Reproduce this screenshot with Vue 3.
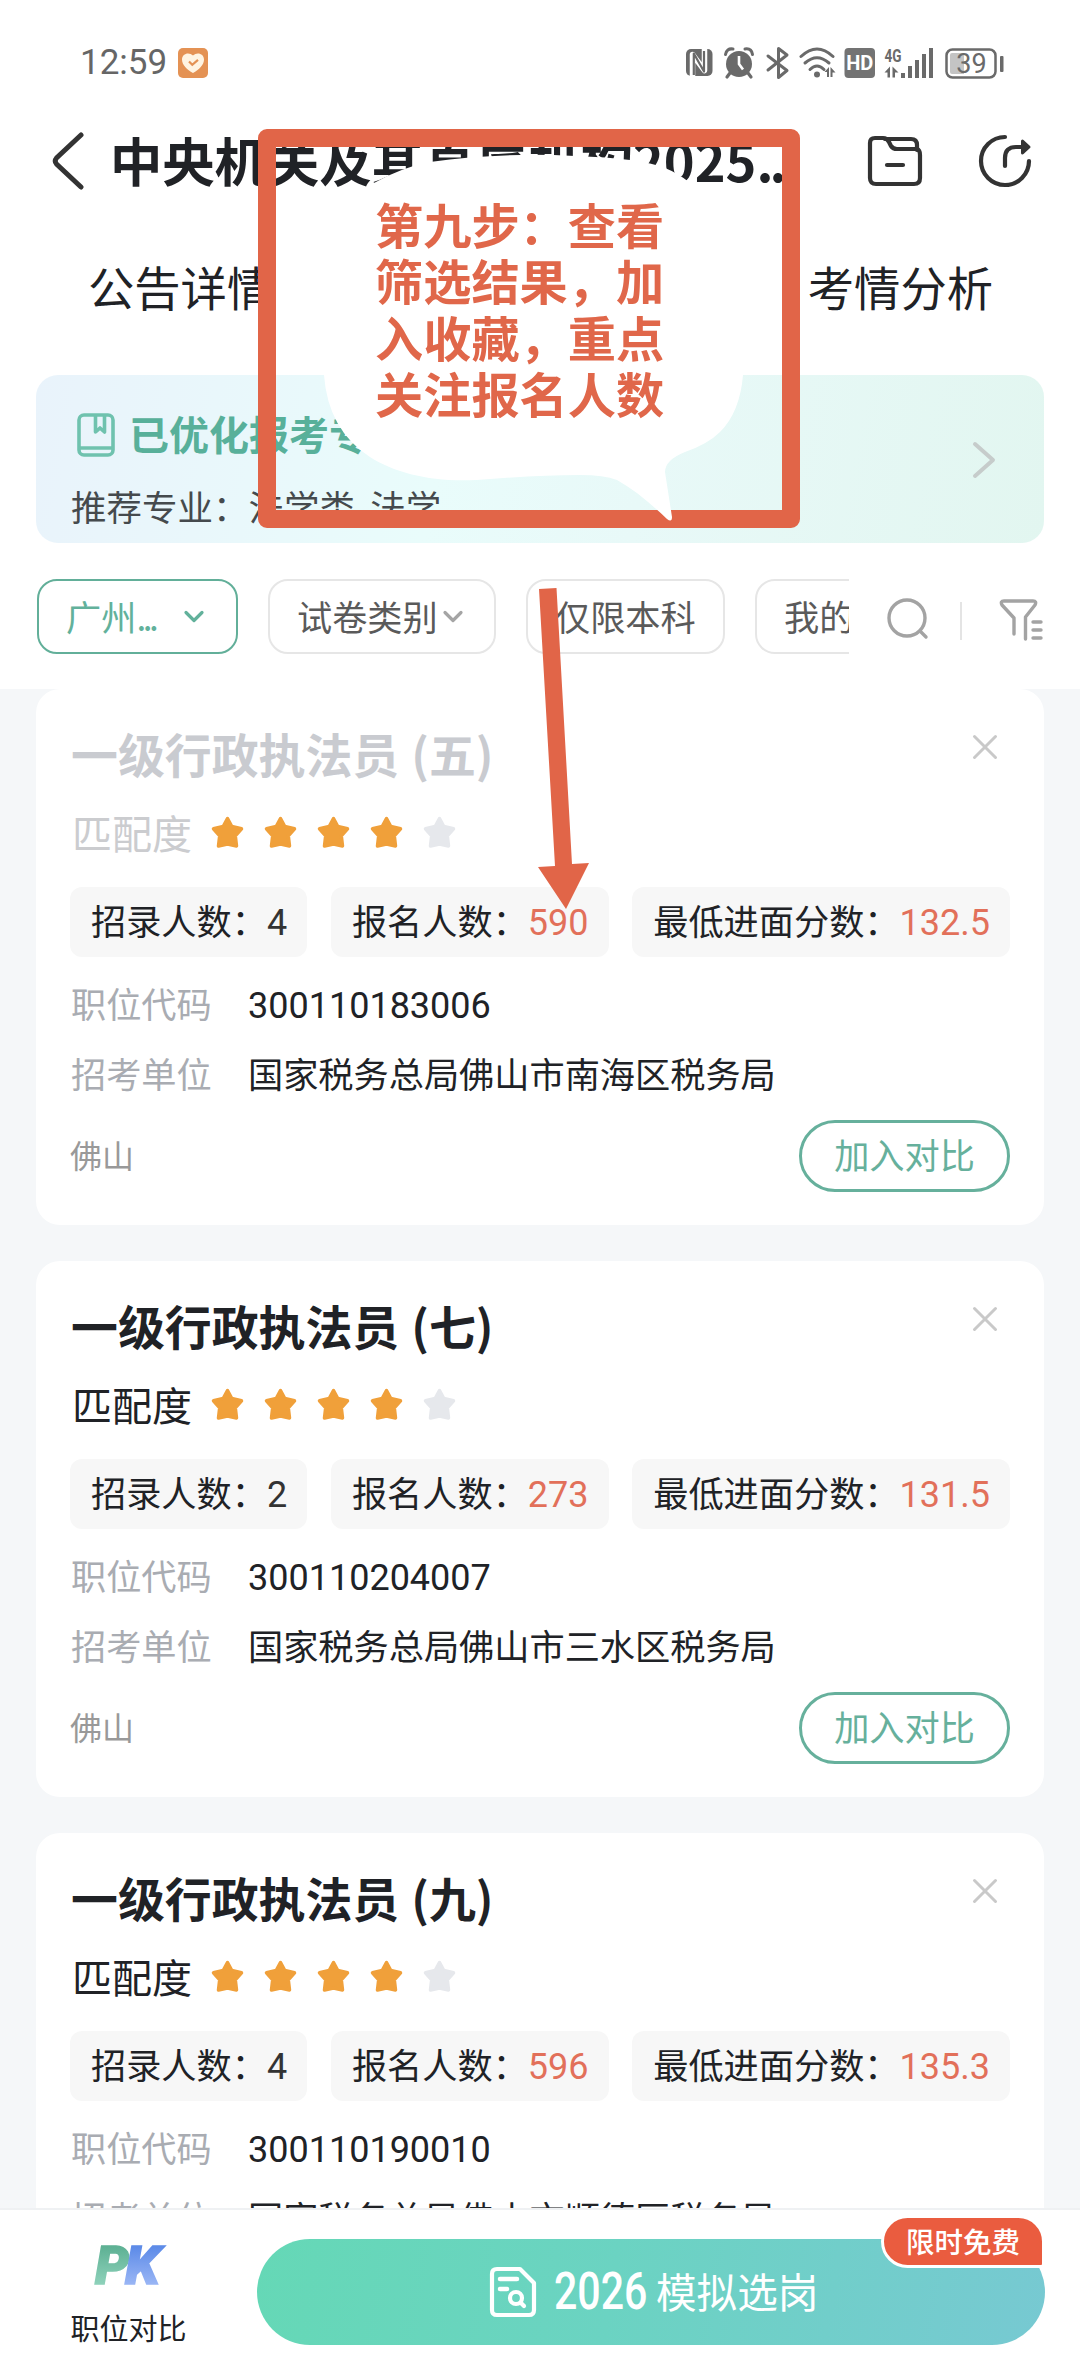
<script setup>
const chips = [
  { text: '广州', more: true, arrow: true, active: true, width: 201 },
  { text: '试卷类别', arrow: true, width: 228 },
  { text: '仅限本科', width: 199 },
  { text: '我的专业', width: 199 },
]

const jobs = [
  { no: '五', hires: 4, applicants: 590, score: '132.5', code: '300110183006', unit: '国家税务总局佛山市南海区税务局', viewed: true },
  { no: '七', hires: 2, applicants: 273, score: '131.5', code: '300110204007', unit: '国家税务总局佛山市三水区税务局' },
  { no: '九', hires: 4, applicants: 596, score: '135.3', code: '300110190010', unit: '国家税务总局佛山市顺德区税务局' },
]
</script>

<template>
  <div class="screen">
    <header class="status">
      <div class="status-left">
        <span class="clock">12:59</span>
        <svg class="heart" width="30" height="30" viewBox="0 0 30 30">
          <rect width="30" height="30" rx="5" fill="#e49254" />
          <path d="M15 25C9 21.500 4 17 4 11.500C4 5.500 11 3.500 15 7.500C19 3.500 26 5.500 26 11.500C26 17 21 21.500 15 25Z" fill="#fff4e2" />
          <path d="M11 13.500L14.300 16.800L20 11.800" fill="none" stroke="#e49254" stroke-width="2.200" />
        </svg>
      </div>
      <svg class="status-icons" width="322" height="36" viewBox="0 0 322 36">
        <rect x="1" y="4" width="26.500" height="27" rx="5" fill="#6a6a6a" />
        <path d="M7.500 32V9.500L19.500 25.500V2.500" fill="none" stroke="#fff" stroke-width="5.500" stroke-linejoin="round" />
        <path d="M8.800 30V8.500L19 26.500V6" fill="none" stroke="#6a6a6a" stroke-width="2.200" stroke-linejoin="round" />
        <circle cx="54" cy="19" r="13" fill="#6a6a6a" />
        <path d="M45 28l-3 4M63 28l3 4" stroke="#6a6a6a" stroke-width="3.200" stroke-linecap="round" />
        <path d="M40.500 9.500Q41.500 3 48 4M60 4Q66.500 3 67.500 9.500" fill="none" stroke="#6a6a6a" stroke-width="3" stroke-linecap="round" />
        <path d="M54 11V19L58 24.500" fill="none" stroke="#fff" stroke-width="2.600" />
        <path d="M83 11L102 25.500L93.500 32.500V3.500L102 10L83 25" fill="none" stroke="#6a6a6a" stroke-width="3" stroke-linejoin="round" stroke-linecap="round" />
        <g fill="none" stroke="#6a6a6a" stroke-width="3" stroke-linecap="round">
          <path d="M116 11.500Q132 -3.500 148 11.500" />
          <path d="M120 18Q132 7.500 144 18" />
          <path d="M125 24.500Q132 17.500 139 24.500" />
        </g>
        <circle cx="132" cy="29.500" r="3" fill="#6a6a6a" />
        <path d="M139.500 27l4.500-5v10h-2v-5zM145.500 22v10h2v-4.500h3z" fill="#6a6a6a" />
        <rect x="159.500" y="3" width="30.500" height="30" rx="4" fill="#737373" />
        <text x="174.800" y="25" text-anchor="middle" class="hd">HD</text>
        <text x="199.500" y="17" class="net" textLength="17" lengthAdjust="spacingAndGlyphs">4G</text>
        <path d="M199.500 27.500l5.500-6v11h-2.500v-5zM207.500 21.500v11h2.500v-5h3.500z" fill="#6a6a6a" />
        <path d="M216 28h4v5h-4zM223 21h4v12h-4zM230 15h4v18h-4zM237 9h4v24h-4zM244 3h4v30h-4z" fill="#6a6a6a" />
        <rect x="261.500" y="4.500" width="49" height="28" rx="6" fill="none" stroke="#6a6a6a" stroke-width="2.500" />
        <path d="M265 10q0-2 2-2h12v21h-12q-2 0-2-2z" fill="#c4c4c4" />
        <rect x="315" y="11" width="3.500" height="16" rx="1" fill="#6a6a6a" />
        <text x="286.500" y="28" text-anchor="middle" class="batt">39</text>
      </svg>
    </header>

    <nav class="navbar">
      <svg class="back" width="34" height="58" viewBox="0 0 34 58">
        <path d="M29 3L4.500 26Q2 29 4.500 32L29 55" fill="none" stroke="#333" stroke-width="5" stroke-linecap="round" />
      </svg>
      <h1>中央机关及其直属机构2025<span class="dots">...</span></h1>
      <svg class="folder" width="56" height="52" viewBox="0 0 56 52">
        <g fill="none" stroke="#333" stroke-width="4.200" stroke-linejoin="round" stroke-linecap="round">
          <path d="M3 43V8Q3 3 8 3H16Q20 3 22 7L24 11Q26 14 30 14H50Q53 15 53 20V43Q53 49 47 49H9Q3 49 3 43Z" />
          <path d="M18 4H44Q50 4 50 10V15" />
          <path d="M20 30H36" />
        </g>
      </svg>
      <svg class="share" width="56" height="56" viewBox="0 0 56 56">
        <g fill="none" stroke="#333" stroke-width="4.200" stroke-linecap="round" stroke-linejoin="round">
          <path d="M28 4A24 24 0 1 0 52 28" />
          <path d="M28 33V25Q28 14 39 14H50" />
          <path d="M45.500 8L52 14L45.500 20Z" fill="#333" stroke-width="3" />
        </g>
      </svg>
    </nav>

    <div class="tabs"><span>公告详情</span><span>考情分析</span></div>

    <section class="banner">
      <div>
        <div class="banner-title">
          <svg width="38" height="44" viewBox="0 0 38 44">
            <g fill="none" stroke="#6fc2ae" stroke-width="3.600" stroke-linejoin="round">
              <rect x="2" y="2" width="34" height="40" rx="5" />
              <path d="M2 35H36M18.500 2V19L23 15L27.500 19V2" />
            </g>
          </svg>
          <b>已优化报考专业</b>
        </div>
        <p>推荐专业：法学类<i>-</i>法学</p>
      </div>
      <svg width="24" height="40" viewBox="0 0 24 40">
        <path d="M3 4L21 20L3 36" fill="none" stroke="#c6cccb" stroke-width="4" stroke-linecap="round" stroke-linejoin="round" />
      </svg>
    </section>

    <div class="filters">
      <div class="chips">
        <div v-for="c in chips" :key="c.text" class="chip" :class="{ active: c.active }" :style="{ width: c.width + 'px' }">
          <span>{{ c.text }}<i v-if="c.more">...</i></span>
          <svg v-if="c.arrow" width="22" height="16" viewBox="0 0 22 16">
            <path d="M3 3.500L11 11.500L19 3.500" fill="none" stroke="currentColor" stroke-width="3.200" stroke-linecap="round" stroke-linejoin="round" />
          </svg>
        </div>
      </div>
      <svg class="search" width="44" height="44" viewBox="0 0 44 44">
        <g fill="none" stroke="#a3a3a3" stroke-width="3.400" stroke-linecap="round">
          <circle cx="21" cy="21" r="18" /><path d="M34 34L40 40" />
        </g>
      </svg>
      <i class="divider"></i>
      <svg class="funnel" width="44" height="42" viewBox="0 0 44 42">
        <g fill="none" stroke="#a3a3a3" stroke-width="3.400" stroke-linecap="round" stroke-linejoin="round">
          <path d="M15 35V19L3 6Q1 2 5 2H34Q38 2 36 6L26.500 18V40" />
          <path d="M34 23H42M34 31H42M34 39H42" />
        </g>
      </svg>
    </div>

    <main class="list">
      <article v-for="j in jobs" :key="j.no" class="card" :class="{ viewed: j.viewed }">
        <div class="card-head">
          <h2>一级行政执法员<span class="paren">({{ j.no }})</span></h2>
          <svg width="26" height="26" viewBox="0 0 26 26">
            <path d="M2.500 2.500L23.500 23.500M23.500 2.500L2.500 23.500" stroke="#c9c9c9" stroke-width="3" stroke-linecap="round" />
          </svg>
        </div>
        <div class="match">
          <span>匹配度</span>
          <svg v-for="n in 5" :key="n" width="33" height="33" viewBox="0 0 33 33" :class="n < 5 ? 'on' : 'off'">
            <path d="M16.500 2.500L20.800 10.500L30.500 12.800L24.300 19.800L25.500 30L16.500 28L7.500 30L8.700 19.800L2.500 12.800L12.200 10.500Z" />
          </svg>
        </div>
        <div class="tags">
          <span>招录人数：<em>{{ j.hires }}</em></span>
          <span>报名人数：<em class="red">{{ j.applicants }}</em></span>
          <span>最低进面分数：<em class="red">{{ j.score }}</em></span>
        </div>
        <dl>
          <dt>职位代码</dt><dd class="num">{{ j.code }}</dd>
          <dt>招考单位</dt><dd>{{ j.unit }}</dd>
        </dl>
        <div class="card-foot">
          <span>佛山</span>
          <button>加入对比</button>
        </div>
      </article>
    </main>

    <footer class="bottom">
      <div class="pk">
        <svg width="80" height="46" viewBox="0 0 80 46">
          <defs>
            <linearGradient id="pkP" x1="0" y1="4" x2="0" y2="42" gradientUnits="userSpaceOnUse"><stop stop-color="#5eb194" /><stop offset="1" stop-color="#8fd2bb" /></linearGradient>
            <linearGradient id="pkK" x1="0" y1="4" x2="0" y2="42" gradientUnits="userSpaceOnUse"><stop stop-color="#5d8be8" /><stop offset="1" stop-color="#9ab6f5" /></linearGradient>
          </defs>
          <text x="6" y="41" class="pk-letter" fill="url(#pkP)" stroke="url(#pkP)" textLength="34" lengthAdjust="spacingAndGlyphs">P</text>
          <text x="36" y="41" class="pk-letter" fill="url(#pkK)" stroke="url(#pkK)" textLength="35" lengthAdjust="spacingAndGlyphs">K</text>
        </svg>
        <span>职位对比</span>
      </div>
      <div class="cta">
        <svg width="48" height="52" viewBox="0 0 48 52">
          <g fill="none" stroke="#fff" stroke-width="4.200" stroke-linecap="round" stroke-linejoin="round">
            <path d="M8 3H31L45 17V44Q45 49 40 49H8Q3 49 3 44V8Q3 3 8 3Z" />
            <path d="M11 13H28M11 23H18" stroke-width="4.500" />
            <circle cx="27" cy="32" r="6" /><path d="M32 37L35 40" />
          </g>
        </svg>
        <span class="year"><b>2026</b></span>
        <span class="cta-text">模拟选岗</span>
        <div class="badge">限时免费</div>
      </div>
    </footer>

    <div class="frame"></div>
    <svg class="overlay" width="1080" height="940" viewBox="0 0 1080 940">
      <path fill="#fff" d="M374 183Q400 168 430 162Q500 152 575 156Q640 158 665 168Q690 178 712 205Q748 260 743 375Q740 412 720 432Q708 444 685 452Q665 460 665 472L672 517Q672 523 667 519C650 503 635 490 617 480Q604 475 580 475Q540 475 490 479C440 484 398 475 370 457Q328 430 324 375Q310 235 374 183Z" />
      <path fill="#e16548" d="M539 589L556.500 588L572 864L589 863L566 909L538 867L555 866Z" />
    </svg>
    <p class="note">第九步：查看筛选结果，加入收藏，重点关注报名人数</p>
  </div>
</template>

<style>
body { margin: 0; background: #fff; }
</style>

<style scoped>
* { box-sizing: border-box; }
.screen {
  position: relative;
  width: 1080px;
  height: 2372px;
  overflow: hidden;
  display: flex;
  flex-direction: column;
  background: #fff;
  color: #202226;
  font-family: "Noto Sans CJK SC", "Noto Sans", sans-serif;
  font-size: 35.200px;
}
h1, h2, p, dl, dd { margin: 0; }
svg { display: block; flex: none; }
i, em { font-style: normal; }

.status { height: 122px; padding: 45px 73px 0 80px; display: flex; justify-content: space-between; }
.status-left { display: flex; gap: 12px; height: 36px; align-items: center; }
.clock { width: 86px; font: 35px/36px Roboto, sans-serif; color: #666; white-space: nowrap; }
.hd { font: 700 20px Roboto, sans-serif; fill: #fff; }
.net { font: 700 19px Roboto, sans-serif; fill: #6a6a6a; }
.batt { font: 27px Roboto, sans-serif; fill: #6a6a6a; }

.navbar { height: 78px; padding-left: 52px; display: flex; align-items: center; }
.navbar svg { margin-top: -1px; }
h1 { width: 678px; margin-left: 24px; font-size: 52.300px; line-height: 74px; height: 78px; font-weight: 700; white-space: nowrap; overflow: hidden; }
.dots { letter-spacing: -4px; }
.navbar .folder { margin-left: 79px; }
.navbar .share { margin-left: 54px; }

.tabs { height: 175px; padding: 60px 87px 0 88px; display: flex; justify-content: space-between; font-size: 46.300px; line-height: 52px; }

.banner {
  height: 168px; margin: 0 36px; padding: 33px 48px 0 35px; border-radius: 22px;
  display: flex; justify-content: space-between;
  background: linear-gradient(100deg, #e9f3fb 0%, #e9fcfb 40%, #e8f9f8 60%, #e2f6f0 100%);
}
.banner > svg { margin-top: 32px; }
.banner-title { display: flex; align-items: center; gap: 14px; height: 50px; padding-left: 6px; color: #58b09a; }
.banner-title svg { margin-top: 4px; }
.banner-title b { font-size: 40px; line-height: 50px; }
.banner p { margin-top: 23px; font-size: 35.500px; line-height: 50px; color: #454a4d; }
.banner p i { margin: 0 1.500px; }

.filters { height: 146px; padding: 36px 36px 0 37px; display: flex; }
.chips { width: 812px; display: flex; gap: 30px; overflow: hidden; }
.chip {
  flex: none; height: 75px; padding-left: 27px; border: 2px solid #e6e6e6; border-radius: 20px;
  display: flex; align-items: center; color: #5a5a5a; white-space: nowrap;
}
.chip span { margin-top: -2px; }
.chip svg { margin-left: 4px; color: #a5a5a5; }
.chip.active { border-color: #62af99; color: #62b19b; }
.chip.active svg { margin-left: 28px; color: #62b19b; }
.chip i { letter-spacing: -3.500px; }
.search { margin: 18px 0 0 37px; }
.divider { width: 2px; height: 38px; margin: 23px 0 0 30px; background: #e4e4e4; }
.funnel { margin: 20px 0 0 37px; }

.list { height: 1519px; padding: 0 36px; overflow: hidden; background: #f5f7f9; display: flex; flex-direction: column; gap: 36px; }
.card { flex: none; height: 536px; padding: 36px 34px 0; border-radius: 24px; background: #fff; }
.card-head { height: 56px; display: flex; justify-content: space-between; padding: 0 12px 0 1px; }
.card-head svg { margin-top: 9px; }
h2 { font-size: 46.900px; line-height: 56px; font-weight: 700; white-space: nowrap; }
.paren { margin-left: 12px; }
.match { height: 106px; padding-left: 2px; display: flex; align-items: center; font-size: 40px; gap: 20px; }
.match span { margin: -5px -1px 0 0; }
.match svg { margin-top: -3px; }
.on { fill: #f0a03a; stroke: #f0a03a; stroke-width: 3.500; stroke-linejoin: round; }
.off { fill: #e6e8ec; stroke: #e6e8ec; stroke-width: 3.500; stroke-linejoin: round; }
.viewed h2 { color: #c9cbd0; }
.viewed .match { color: #cbcccf; }
.tags { display: flex; justify-content: space-between; line-height: 65px; white-space: nowrap; }
.tags span { height: 70px; padding: 0 20px 0 21px; border-radius: 12px; background: #f7f7f7; }
.tags em { font-family: Roboto, sans-serif; font-size: 36px; color: #333; }
.tags .red { color: #e2705a; }
dl { margin-top: 11px; padding-left: 1px; display: grid; grid-template-columns: 177px 1fr; grid-auto-rows: 70px; line-height: 70px; white-space: nowrap; }
dt { color: #a9acb2; }
.num { padding-top: 3px; font-family: Roboto, sans-serif; font-size: 36px; }
.card-foot { margin-top: 12px; height: 72px; display: flex; align-items: center; justify-content: space-between; font-size: 32px; color: #999; }
.card-foot span { margin-top: -4px; }
button { width: 211px; height: 72px; padding: 0 0 4px; border: 3px solid #66b09c; border-radius: 36px; background: #fff; font: 35.200px/62px "Noto Sans CJK SC", sans-serif; color: #66b09c; }

.bottom { height: 164px; padding: 29px 35px 0 0; border-top: 2px solid #eff1f3; display: flex; background: #fff; }
.pk { width: 257px; display: flex; flex-direction: column; align-items: center; font-size: 29px; line-height: 40px; }
.pk svg { margin: 4px 0 18px; }
.pk-letter { font: italic 900 53px Roboto, sans-serif; stroke-width: 1.500px; }
.cta { position: relative; width: 788px; height: 106px; border-radius: 53px; display: flex; align-items: center; padding-left: 232px; color: #fff; background: linear-gradient(100deg, #65d8b6, #6bd3c2 45%, #77c9d2); }
.year { width: 92px; margin-left: 17px; }
.year b { display: block; width: 120px; font: 500 52px/60px Roboto, sans-serif; transform: scaleX(.79); transform-origin: 0 50%; }
.cta-text { margin: -3px 0 0 10px; font-size: 40.600px; line-height: 60px; }
.badge { position: absolute; right: 0; top: -24px; width: 164px; height: 53px; border: 3px solid #fff; border-radius: 27px 27px 4px 27px; background: #ea5c3f; text-align: center; font-size: 28.500px; line-height: 46px; font-weight: 500; }

.frame { position: absolute; left: 258px; top: 129px; width: 542px; height: 399px; border: 18px solid #e16548; border-radius: 9px; }
.overlay { position: absolute; left: 0; top: 0; }
.note { position: absolute; left: 375px; top: 195px; width: 292px; font-size: 48.200px; line-height: 56.300px; font-weight: 700; color: #e0674a; }
</style>
